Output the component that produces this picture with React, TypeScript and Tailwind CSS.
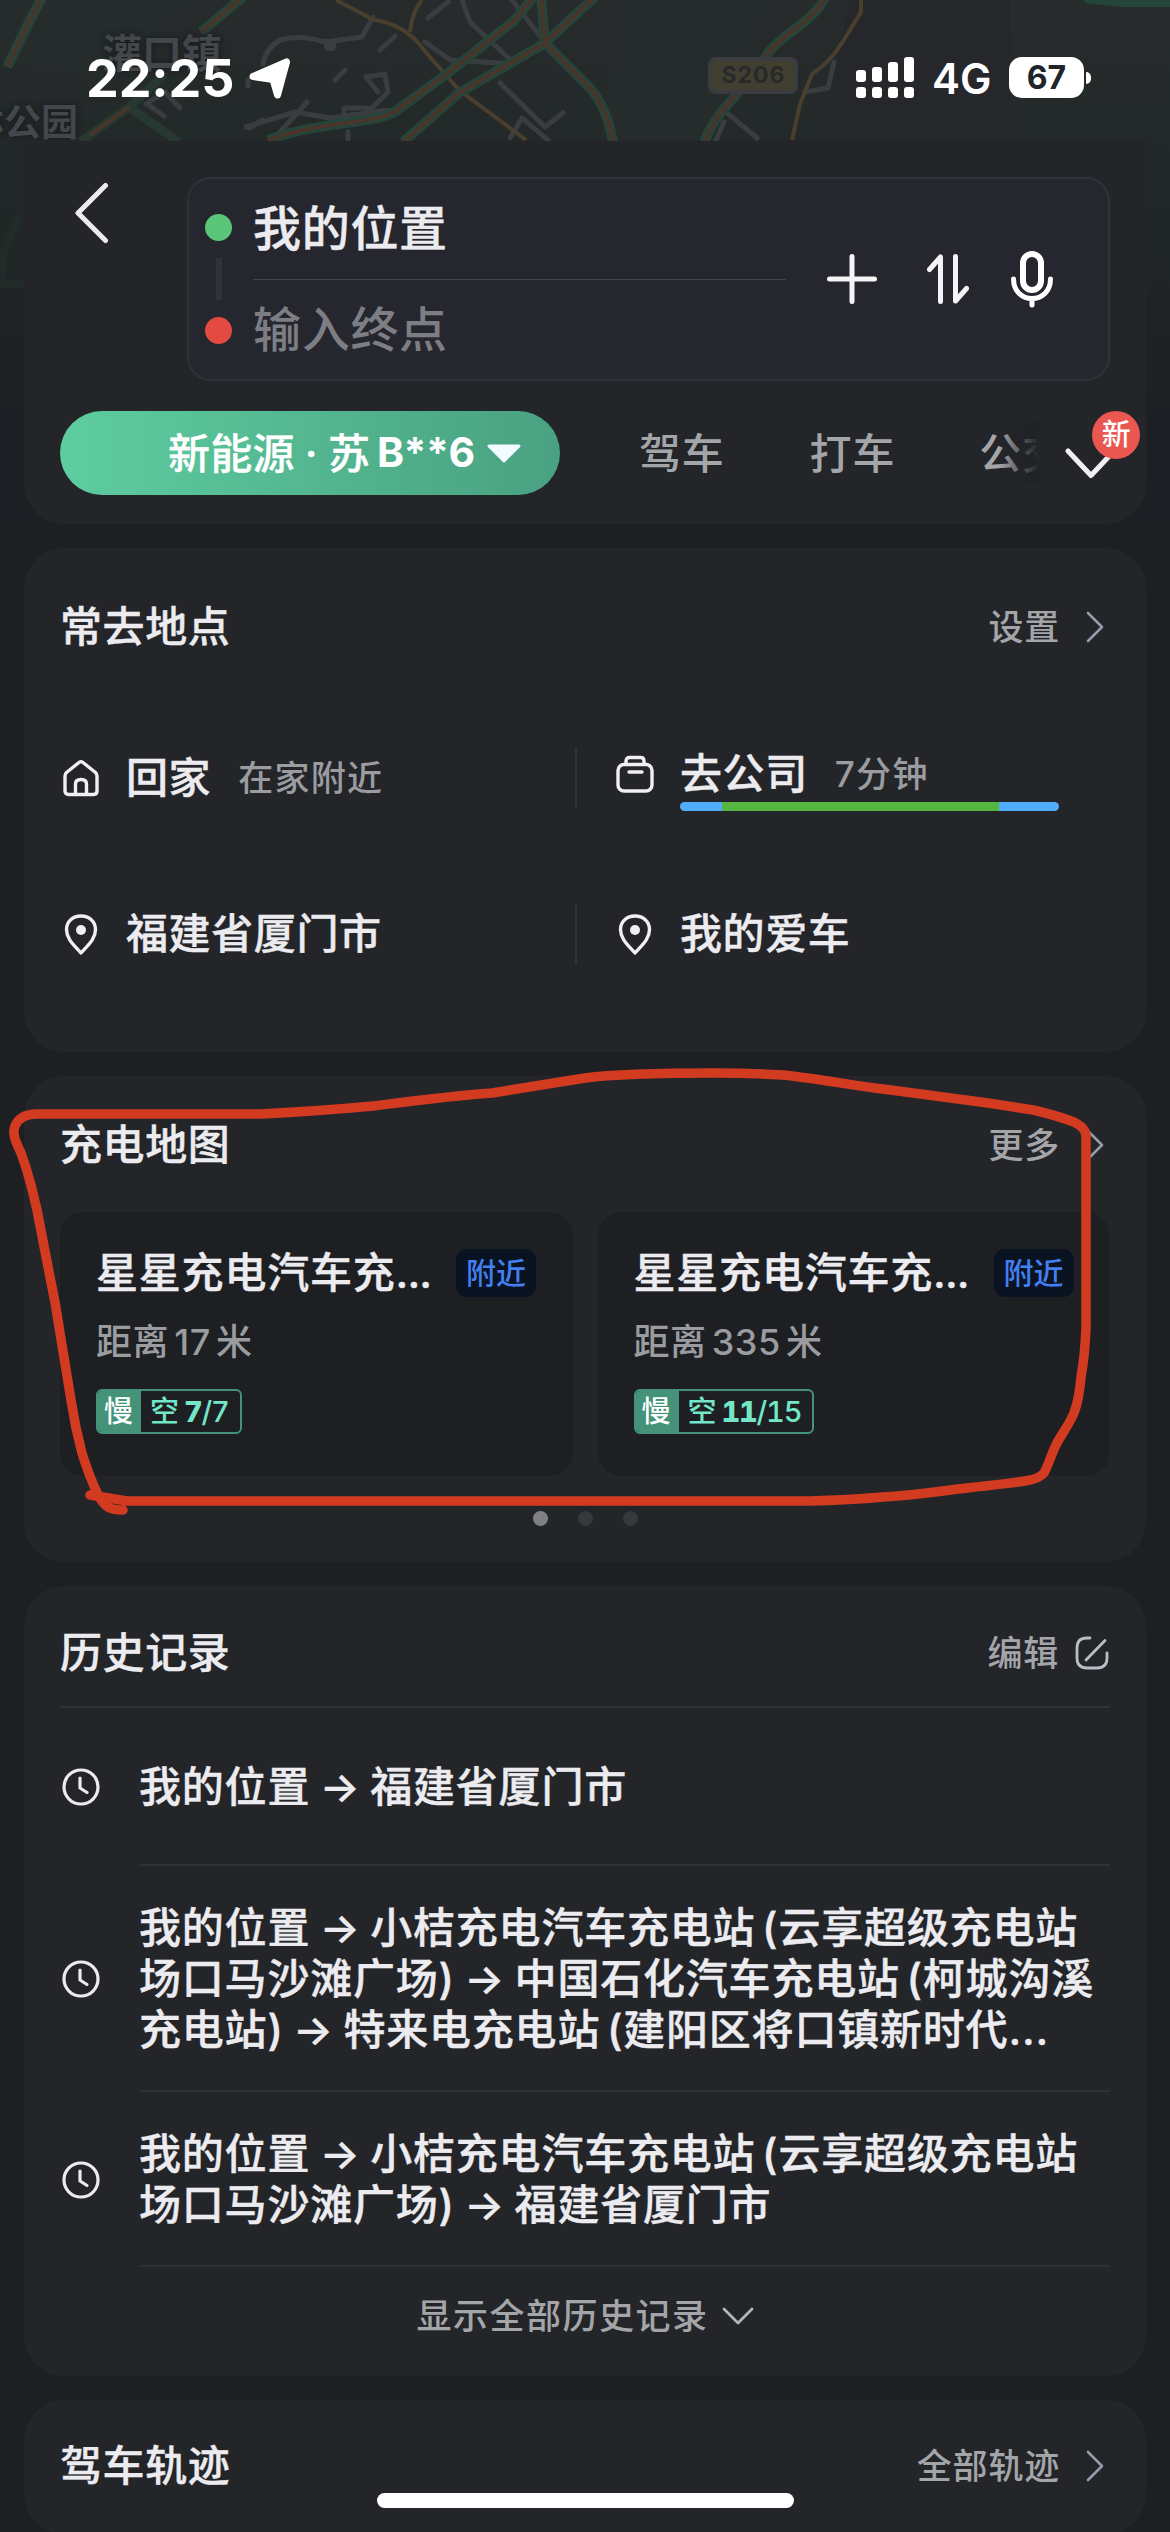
import type { ReactNode } from "react";

const places = [
  { icon: "home", name: "回家", note: "在家附近", bar: false },
  { icon: "work", name: "去公司", note: "7分钟", bar: true },
  { icon: "pin", name: "福建省厦门市", note: "", bar: false },
  { icon: "pin", name: "我的爱车", note: "", bar: false },
];

const stations = [
  { name: "星星充电汽车充", distance: "17", free: "7", total: "7" },
  { name: "星星充电汽车充", distance: "335", free: "11", total: "15" },
];

const history = [
  { lines: ["我的位置→福建省厦门市"], height: "h-[158px]" },
  {
    lines: [
      "我的位置→小桔充电汽车充电站(云享超级充电站",
      "场口马沙滩广场)→中国石化汽车充电站(柯城沟溪",
      "充电站)→特来电充电站(建阳区将口镇新时代...",
    ],
    height: "h-[226px]",
  },
  {
    lines: ["我的位置→小桔充电汽车充电站(云享超级充电站", "场口马沙滩广场)→福建省厦门市"],
    height: "h-[175px]",
  },
];

function MapBackdrop() {
  return (
    <div className="absolute inset-x-0 top-0 h-[524px] bg-linear-to-b from-[#272b2c] via-[#212727] via-40% to-[#1d1f24] to-80%">
      <svg className="h-full w-full" viewBox="0 0 1170 524" fill="none">
        <path d="M620 0H780L700 140H600ZM0 0H200L110 80L0 60Z" fill="#252c2b" />
        <path d="M850 0H1010V141H820Z" fill="#25272b" />
        <g stroke="#3a3d40" strokeWidth="5" strokeLinejoin="round" strokeLinecap="round">
          <path d="M246 127L295 112L330 118L388 110M250 128L262 120M263 64Q266 48 280 40Q300 34 325 42L362 37L373 17M344 118V108H372L388 92L385 74L366 77L378 92" />
          <path d="M462 0L470 22L515 64L450 60L425 42M500 83L545 127L563 113M510 138L522 118L548 140M512 0L540 36M280 132L307 102M335 80L345 70M380 50L395 36" />
          <path d="M146 104L165 92L180 108M150 106L164 116M727 113L757 138M716 140L724 122M805 92L828 88L834 62M348 132V140M428 18L448 2M248 80V86" />
          <path d="M324 40H336L334 50H326Z" fill="#3a3d40" strokeWidth="2" />
        </g>
        <g stroke="#4a3e2c" strokeWidth="4">
          <path d="M336 0L374 20Q405 24 424 50L459 90L526 140M422 0Q412 12 410 32M861 0V12L842 43Q830 62 812 74L800 104L792 140" />
        </g>
        <path d="M80 142L129 107L179 142M129 107L165 74" stroke="#26382f" strokeWidth="9" />
        <g stroke="#25443a" strokeWidth="10">
          <path d="M43 -4L30 20L7 67M244 -4L201 32M268 140C330 118 380 126 400 108L448 73L515 20L534 -4M403 142L459 93L545 43L598 -6M541 -4L545 43L588 86Q606 104 613 142M826 -4C812 24 784 32 768 53C748 90 722 100 704 142M1085 -2L1120 2H1170" />
        </g>
        <g stroke="#4a352b" strokeWidth="4">
          <path d="M43 -4L30 20L7 67M244 -4L201 32M129 107L90 135M268 140C330 118 380 126 400 108L448 73L515 20L534 -4M403 142L459 93L545 43L598 -6M541 -4L545 43L588 86Q606 104 613 142M826 -4C812 24 784 32 768 53C748 90 722 100 704 142" />
        </g>
        <path d="M20 216Q0 250 2 280M0 284H24" stroke="#222b28" strokeWidth="8" />
      </svg>
      <span className="absolute top-[28px] left-[102px] text-[40px] leading-[52px] font-bold text-[#43464a] [text-shadow:0_0_6px_#15181a]">
        灌口镇
      </span>
      <span className="absolute top-[98px] left-[-33px] text-[37px] leading-[50px] font-bold text-[#43464a] [text-shadow:0_0_6px_#15181a]">
        林公园
      </span>
      <span className="absolute top-[57px] left-[708px] flex h-[37px] w-[90px] items-center justify-center rounded-lg border-4 border-[#3b3c41] bg-[#413f2f] pl-px text-[23px] font-bold tracking-[1px] text-[#27292b]">
        S206
      </span>
    </div>
  );
}

function StatusBar() {
  return (
    <div className="relative flex h-[141px] shrink-0 items-start pt-[57px] text-white">
      <div className="ml-[86px] w-[163px] text-[52px] leading-[43px] font-bold tracking-[-0.1px]">22:25</div>
      <svg className="mt-px h-[42px] w-[42px]" viewBox="0 0 42 42" fill="#fff" stroke="#fff" strokeWidth="7" strokeLinejoin="round">
        <path d="M37.500 4L28.500 37L24 21.500L4 18.500Z" />
      </svg>
      <svg className="ml-[565px] h-[41px] w-[58px]" viewBox="0 0 58 41" fill="#fff">
        <rect y="13" width="10" height="12" rx="3" />
        <rect x="16" y="10" width="10" height="15" rx="3" />
        <rect x="32" y="5" width="10" height="20" rx="3" />
        <rect x="48" width="10" height="25" rx="3" />
        <rect y="30" width="10" height="11" rx="3" />
        <rect x="16" y="30" width="10" height="11" rx="3" />
        <rect x="32" y="30" width="10" height="11" rx="3" />
        <rect x="48" y="30" width="10" height="11" rx="3" />
      </svg>
      <div className="ml-[18px] w-[77px] text-[42px] leading-[43px] font-semibold">4G</div>
      <div className="flex h-[41px] w-[75px] items-center justify-center rounded-[13px] bg-white text-[32px] font-bold text-[#212428]">
        67
      </div>
      <div className="mt-[15px] ml-[2px] h-[12px] w-[5px] rounded-r-full bg-white" />
    </div>
  );
}

function ChevronRight() {
  return (
    <svg className="mr-[6px] ml-[26px] h-[32px] w-[18px]" viewBox="0 0 18 32" fill="none" stroke="#949bab" strokeWidth="2.600" strokeLinecap="round" strokeLinejoin="round">
      <path d="M2 2L16 16L2 30" />
    </svg>
  );
}

function PlaceIcon({ name }: { name: string }) {
  const common = {
    className: "w-[38px] h-[42px] shrink-0",
    viewBox: "0 0 38 42",
    fill: "none",
    stroke: "#f0f0f3",
    strokeWidth: 3.4,
    strokeLinejoin: "round" as const,
    strokeLinecap: "round" as const,
  };
  if (name === "home") {
    return (
      <svg {...common}>
        <path d="M3 19Q3 17 4.500 15.500L17 5.500Q19 4 21 5.500L33.500 15.500Q35 17 35 19V34Q35 37.500 31.500 37.500H6.500Q3 37.500 3 34Z" />
        <path d="M13.500 37V27Q13.500 22.500 19 22.500Q24.500 22.500 24.500 27V37" />
      </svg>
    );
  }
  if (name === "work") {
    return (
      <svg {...common}>
        <rect x="2" y="11.500" width="34" height="26.500" rx="6" />
        <path d="M10 11V8Q10 4.500 13.500 4.500H24.500Q28 4.500 28 8V11M13 19H26" />
      </svg>
    );
  }
  return (
    <svg {...common}>
      <path d="M19 40C12 32 4.500 26 4.500 16.500C4.500 8.500 11 3 19 3C27 3 33.500 8.500 33.500 16.500C33.500 26 26 32 19 40Z" />
      <circle cx="19" cy="17" r="5" fill="#f0f0f3" stroke="none" />
    </svg>
  );
}

function ClockIcon() {
  return (
    <svg className="ml-[2px] h-[38px] w-[38px] shrink-0" viewBox="0 0 38 38" fill="none" stroke="#ececef" strokeWidth="3.200" strokeLinecap="round" strokeLinejoin="round">
      <circle cx="19" cy="19" r="17" />
      <path d="M18 10V20L25 24.500" />
    </svg>
  );
}

function SectionHead({ title, children }: { title: string; children: ReactNode }) {
  return (
    <div className="flex items-center justify-between">
      <h2 className="text-[42px] leading-[50px] font-medium tracking-[0.600px] text-[#ececf0] [-webkit-text-stroke:0.4px]">
        {title}
      </h2>
      <div className="flex items-center text-[35px] leading-[50px] font-medium tracking-[0.800px] text-[#a4a5a9]">
        {children}
      </div>
    </div>
  );
}

function Route({ text }: { text: string }) {
  return (
    <p className="flex whitespace-nowrap">
      {text.split(/([→()])/).map((part, i) => {
        if (part === "→") {
          return (
            <span key={i} className="w-[60px] text-center">
              →
            </span>
          );
        }
        if (part === "(") {
          return (
            <span key={i} className="w-[23px] text-right">
              (
            </span>
          );
        }
        if (part === ")") {
          return (
            <span key={i} className="w-[16px]">
              )
            </span>
          );
        }
        return <span key={i}>{part}</span>;
      })}
    </p>
  );
}

function SearchPanel() {
  return (
    <section className="relative h-[383px] shrink-0 rounded-b-[40px] bg-[#232529] px-9 pt-[36px]">
      <div className="flex">
        <svg className="mt-[5px] ml-[14px] h-[62px] w-[36px]" viewBox="0 0 36 62" fill="none" stroke="#ececf0" strokeWidth="5" strokeLinecap="round" strokeLinejoin="round">
          <path d="M31.500 3.500L4 31L31.500 58.500" />
        </svg>
        <div className="ml-[77px] flex h-[204px] w-[923px] items-center rounded-[24px] border-2 border-[#30323a] bg-[#25262e]">
          <div className="ml-[16px] flex h-[130px] w-[27px] flex-col items-center justify-between">
            <span className="size-[27px] rounded-full bg-[#5bc57a]" />
            <span className="h-[42px] w-[6px] bg-[#31323a]" />
            <span className="size-[27px] rounded-full bg-[#e24a42]" />
          </div>
          <div className="ml-[21px] w-[533px] text-[48px] leading-[100px] font-medium tracking-[0.700px]">
            <div className="border-b border-[#3f454c] text-[#ececf0] [-webkit-text-stroke:0.4px]">我的位置</div>
            <div className="text-[#7d7e84]">输入终点</div>
          </div>
          <svg className="ml-[41px] size-[50px]" viewBox="0 0 50 50" fill="none" stroke="#f4f4f7" strokeWidth="5" strokeLinecap="round">
            <path d="M25 2.500V47.500M2.500 25H47.500" />
          </svg>
          <svg className="ml-[50px] h-[50px] w-[42px]" viewBox="0 0 42 50" fill="none" stroke="#f4f4f7" strokeWidth="5" strokeLinecap="round" strokeLinejoin="round">
            <path d="M2.500 15.500L13.500 3V47.500M28.500 2.500V47L39.500 34.500" />
          </svg>
          <svg className="ml-[42px] h-[57px] w-[42px]" viewBox="0 0 42 57" fill="none" stroke="#fff" strokeWidth="5" strokeLinecap="round">
            <rect x="12" y="3" width="18" height="36" rx="9" strokeWidth="6" />
            <path d="M2.500 28C2.500 54 39.500 54 39.500 28M21 49V54" />
          </svg>
        </div>
      </div>

      {/* travel mode tabs */}
      <div className="mt-[30px] flex h-[84px] items-center text-[42px] font-medium tracking-[0.800px] whitespace-nowrap text-[#a4a5a9]">
        <div className="flex h-full w-[500px] shrink-0 items-center rounded-full bg-linear-to-r from-[#5ecda0] to-[#49a181] pl-[108px] text-white [-webkit-text-stroke:0.3px]">
          <span className="tracking-[0.300px]">新能源</span>
          <span className="w-[33px] text-center">·</span>
          <span className="w-[49px]">苏</span>
          <span className="w-[110px] text-[41px] font-bold tracking-[-0.500px] [-webkit-text-stroke:0px]">B**6</span>
          <svg className="h-[19px] w-[34px]" viewBox="0 0 34 19" fill="#f2fbff" stroke="#f2fbff" strokeWidth="3" strokeLinejoin="round">
            <path d="M2 2H32L17 17Z" />
          </svg>
        </div>
        <span className="ml-[79px] shrink-0">驾车</span>
        <span className="ml-[85px] shrink-0">打车</span>
        <span className="relative ml-[84px] w-[60px] shrink-0 overflow-hidden">
          公交
          <span className="absolute inset-y-0 right-0 w-[40px] bg-linear-to-r from-transparent to-[#202226]" />
        </span>
        <div className="relative ml-[26px] h-full w-[52px] shrink-0">
          <svg className="mt-[36px] h-[33px] w-[52px]" viewBox="0 0 52 33" fill="none" stroke="#f0f0f4" strokeWidth="5" strokeLinecap="round" strokeLinejoin="round">
            <path d="M3 4L26 28.500L49 4" />
          </svg>
          <span className="absolute top-0 left-[27px] flex size-[48px] items-center justify-center rounded-full bg-[#ea5650] text-[29px] tracking-normal text-white">
            新
          </span>
        </div>
      </div>
    </section>
  );
}

function PlacesPanel() {
  return (
    <section className="h-[504px] shrink-0 rounded-[40px] bg-[#232529] px-9 pt-[54px]">
      <SectionHead title="常去地点">
        设置
        <ChevronRight />
      </SectionHead>
      <div className="mt-[48px] grid grid-cols-[517px_1fr]">
        {places.map((place, i) => (
          <div
            key={place.name}
            className={i % 2 ? "flex h-[156px] items-center pl-[37px]" : "flex h-[156px] items-center"}
          >
            <div className={place.bar ? "relative flex w-full items-center pb-2" : "flex w-full items-center"}>
              <span className="ml-[2px] flex">
                <PlaceIcon name={place.icon} />
              </span>
              <span className="ml-[26px] text-[42px] leading-[50px] font-medium tracking-[0.600px] text-[#ececf0] [-webkit-text-stroke:0.4px]">
                {place.name}
              </span>
              <span className="ml-[27px] text-[35px] font-medium tracking-[1.300px] text-[#9b9ca0]">{place.note}</span>
              {place.bar && (
                <span className="absolute top-[54px] left-[66px] flex h-[9px] w-[379px] overflow-hidden rounded-full bg-[#50adfb]">
                  <span className="ml-[42px] h-full w-[277px] bg-[#55b73f]" />
                </span>
              )}
            </div>
            {i % 2 === 0 && <span className="h-[60px] w-[2px] shrink-0 bg-[#303238]" />}
          </div>
        ))}
      </div>
    </section>
  );
}

function ChargingPanel() {
  return (
    <section className="h-[486px] shrink-0 rounded-[40px] bg-[#232529] px-9 pt-[44px]">
      <SectionHead title="充电地图">
        更多
        <ChevronRight />
      </SectionHead>
      <div className="mt-[42px] flex gap-[25px]">
        {stations.map((s) => (
          <div key={s.distance} className="h-[264px] flex-1 rounded-[24px] bg-[#1d1f23] pt-[36px] pl-[36px]">
            <div className="flex items-center">
              <span className="w-[360px] text-[42px] leading-[50px] font-medium tracking-[0.800px] whitespace-nowrap text-[#ececf0] [-webkit-text-stroke:0.4px]">
                {s.name}
                <span className="tracking-[-0.900px]">...</span>
              </span>
              <span className="flex h-[48px] w-[80px] items-center justify-center rounded-[11px] bg-[#0a1322] text-[30px] font-medium text-[#437ff0]">
                附近
              </span>
            </div>
            <div className="mt-[19px] flex gap-[5px] text-[36px] leading-[50px] font-medium tracking-[0.600px] text-[#9b9ca0]">
              <span>距离</span>
              <span>{s.distance}</span>
              <span>米</span>
            </div>
            <div className="mt-[22px] inline-flex h-[45px] overflow-hidden rounded-[6px] border-2 border-[#449379] text-[29px] leading-[41px]">
              <span className="w-[43px] bg-[#449379] pl-[6px] font-medium text-white">慢</span>
              <span className="flex gap-[5px] pr-[11px] pl-[9px] font-medium text-[#72e6c6]">
                <span>空</span>
                <span className="tracking-[-1.200px] tabular-nums">
                  <b className="font-extrabold">{s.free}</b>/{s.total}
                </span>
              </span>
            </div>
          </div>
        ))}
      </div>
      <div className="mt-[35px] flex justify-center gap-[30px]">
        <span className="size-[15px] rounded-full bg-[#808186]" />
        <span className="size-[15px] rounded-full bg-[#36383d]" />
        <span className="size-[15px] rounded-full bg-[#36383d]" />
      </div>
    </section>
  );
}

function HistoryPanel() {
  return (
    <section className="h-[790px] shrink-0 rounded-[40px] bg-[#232529] px-9 pt-[42px]">
      <SectionHead title="历史记录">
        编辑
        <svg className="ml-[16px] h-[34px] w-[35px]" viewBox="0 0 35 34" fill="none" stroke="#b9bcc4" strokeWidth="2.800" strokeLinecap="round">
          <path d="M15 2H12Q2 2 2 12V22Q2 32 12 32H22Q32 32 32 22V17M11 24L30 4.500" />
        </svg>
      </SectionHead>
      <div className="mt-[28px] border-t-2 border-[#303238]">
        {history.map((item, i) => (
          <div key={i} className={`flex items-center ${item.height}`}>
            <ClockIcon />
            <div className="ml-[39px] flex h-full flex-1 flex-col justify-center border-b-2 border-[#2e3035] text-[42px] leading-[51px] font-medium tracking-[0.800px] text-[#ececf0] [-webkit-text-stroke:0.4px]">
              {item.lines.map((line) => (
                <Route key={line} text={line} />
              ))}
            </div>
          </div>
        ))}
      </div>
      <div className="mt-[24px] flex items-center justify-center text-[35px] leading-[50px] font-medium tracking-[1.500px] text-[#a4a5a9]">
        显示全部历史记录
        <svg className="ml-[13px] h-[18px] w-[32px]" viewBox="0 0 32 18" fill="none" stroke="#b3b5ba" strokeWidth="2.800" strokeLinecap="round" strokeLinejoin="round">
          <path d="M2 2L16 16L30 2" />
        </svg>
      </div>
    </section>
  );
}

// Hand-drawn red marker loop around the charging section
function MarkerLoop() {
  return (
    <svg className="pointer-events-none absolute top-[1060px] left-0 h-[470px] w-[1170px]" viewBox="0 1060 1170 470" fill="none" stroke="#d23b20" strokeWidth="9.500" strokeLinecap="round" strokeLinejoin="round">
      <path d="M123 1510C110 1510 106 1508 99 1497C90 1478 87 1470 82 1453Q75 1427 71 1400L60 1333Q56 1305 50 1277L37 1210Q30 1178 21 1153C15 1140 12 1134 15 1126Q20 1114 37 1114H261C300 1112 330 1110 373 1106C420 1100 450 1096 492 1093L585 1078C615 1074 650 1073 716 1073C750 1073 765 1074 783 1075C820 1079 850 1085 883 1089L988 1103L1033 1110Q1055 1115 1074 1122Q1086 1128 1086 1136V1327Q1085 1355 1081 1377Q1079 1400 1074 1413C1068 1427 1060 1436 1055 1447C1050 1458 1048 1466 1044 1473Q1039 1479 1025 1481C1000 1485 980 1486 958 1489C935 1492 915 1495 883 1497Q850 1500 809 1501H127L90 1495" />
    </svg>
  );
}

export default function App() {
  return (
    <div className="relative flex h-[2532px] w-[1170px] flex-col overflow-hidden bg-[#1d1f23] font-['Inter','Noto_Sans_CJK_SC',sans-serif]">
      <MapBackdrop />
      <StatusBar />
      <main className="relative flex flex-col gap-6 px-6">
        <SearchPanel />
        <PlacesPanel />
        <ChargingPanel />
        <HistoryPanel />
        <section className="h-[134px] shrink-0 rounded-[40px] bg-[#232529] px-9 pt-[41px]">
          <SectionHead title="驾车轨迹">
            全部轨迹
            <ChevronRight />
          </SectionHead>
        </section>
      </main>
      <MarkerLoop />
      <div className="absolute top-[2493px] left-[377px] h-[15px] w-[417px] rounded-full bg-white" />
    </div>
  );
}
